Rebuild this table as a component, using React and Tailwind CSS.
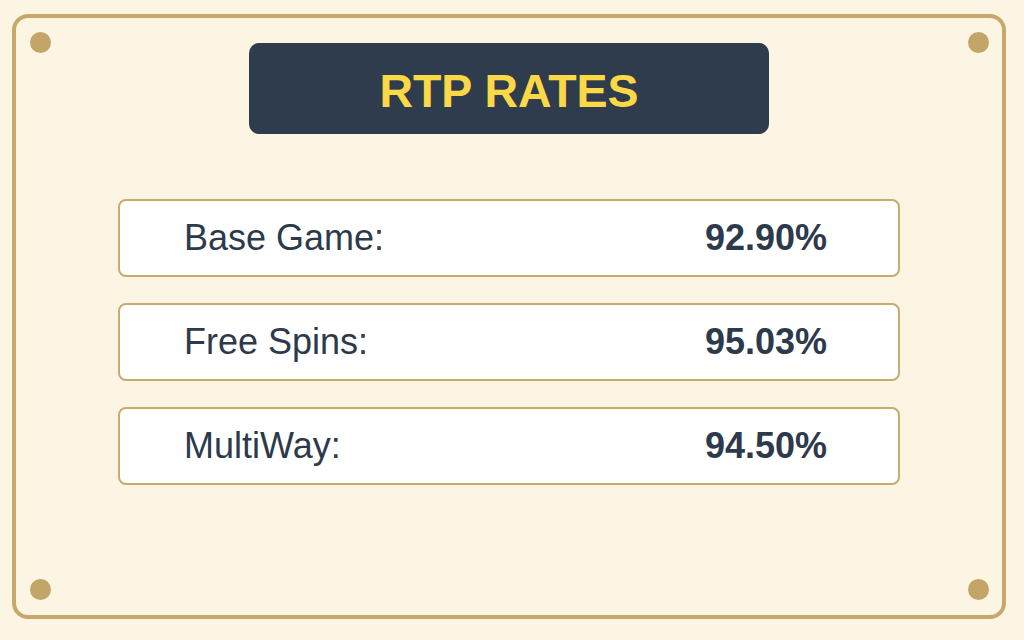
const rates = [
  { label: 'Base Game:', value: '92.90%' },
  { label: 'Free Spins:', value: '95.03%' },
  { label: 'MultiWay:', value: '94.50%' },
];

function Dot({ className }) {
  return <span className={`absolute w-[21px] h-[21px] rounded-full bg-[#c3a567] ${className}`} />;
}

export default function App() {
  return (
    <div className="w-[1024px] h-[640px] bg-[#fcf5e3] overflow-hidden pt-[14px] pl-[12px] font-['Liberation_Sans',Arial,sans-serif]">
      <div className="relative w-[994px] h-[605px] border-4 border-[#c6a86b] rounded-[16px] flex flex-col items-center pt-[25px]">
        <Dot className="left-[14px] top-[14px]" />
        <Dot className="right-[13px] top-[14px]" />
        <Dot className="left-[14px] bottom-[15px]" />
        <Dot className="right-[13px] bottom-[15px]" />

        <div className="w-[520px] h-[91px] rounded-[10px] bg-[#2f3c4e] flex items-center justify-center pt-[5px]">
          <h1 className="text-[46.5px] font-bold text-[#fbd946] leading-none">RTP RATES</h1>
        </div>

        <div className="mt-[65px] w-[782px] flex flex-col gap-[26px]">
          {rates.map(r => (
            <div
              key={r.label}
              className="h-[78px] bg-white border-[2.5px] border-[#c9ab6e] rounded-[8px] flex items-center justify-between pl-[64px] pr-[71px] text-[36px] text-[#2d3a4b]"
            >
              <span>{r.label}</span>
              <span className="font-bold">{r.value}</span>
            </div>
          ))}
        </div>
      </div>
    </div>
  );
}
